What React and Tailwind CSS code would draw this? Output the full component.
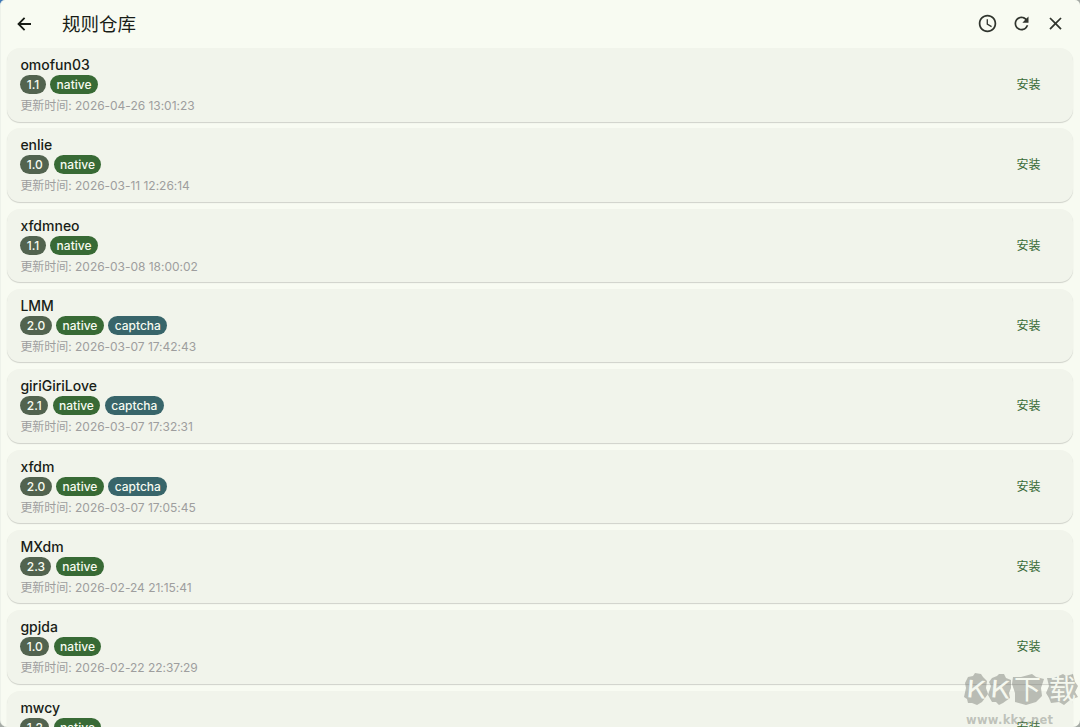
import React from "react";
import { MdSchedule, MdRefresh, MdClose } from "react-icons/md";

const rules = [
  { name: "omofun03", version: "1.1", updated: "2026-04-26 13:01:23" },
  { name: "enlie", version: "1.0", updated: "2026-03-11 12:26:14" },
  { name: "xfdmneo", version: "1.1", updated: "2026-03-08 18:00:02" },
  { name: "LMM", version: "2.0", captcha: true, updated: "2026-03-07 17:42:43" },
  { name: "giriGiriLove", version: "2.1", captcha: true, updated: "2026-03-07 17:32:31" },
  { name: "xfdm", version: "2.0", captcha: true, updated: "2026-03-07 17:05:45" },
  { name: "MXdm", version: "2.3", updated: "2026-02-24 21:15:41" },
  { name: "gpjda", version: "1.0", updated: "2026-02-22 22:37:29" },
  { name: "mwcy", version: "1.2", updated: "2026-02-21 20:14:06" },
];

function Tag({ className, children }) {
  return (
    <span className={`h-[19px] rounded-full px-[6.4px] text-[12px] leading-[19px] font-medium text-[#f7fbf1] ${className}`}>
      {children}
    </span>
  );
}

function RuleCard({ rule }) {
  return (
    <div className="flex h-[73.5px] shrink-0 items-center justify-between rounded-[13px] bg-[#f1f4eb] pr-[32.5px] pl-[13.4px] shadow-[0_1px_1px_rgba(0,0,0,0.17)]">
      <div className="pt-[1.6px]">
        <h3 className="h-[18px] text-[14px] leading-[18px] font-medium text-[#181d17]">{rule.name}</h3>
        <div className="mt-px flex gap-[4.5px]">
          <Tag className="bg-[#52634f]">{rule.version}</Tag>
          <Tag className="bg-[#386a35]">native</Tag>
          {rule.captcha && <Tag className="bg-[#38656a]">captcha</Tag>}
        </div>
        <p className="mt-[3px] h-[18px] text-[12px] leading-[18px] tracking-[-0.03px] text-[#9e9e9e]">更新时间: {rule.updated}</p>
      </div>
      <button className="pt-[0.6px] text-[12px] text-[#386a35]">安装</button>
    </div>
  );
}

function BackArrow() {
  return (
    <svg width="20" height="20" viewBox="0 0 20 20" fill="none" stroke="currentColor" strokeWidth="1.8">
      <path d="M17 10H4.5M10.6 3.9 4.5 10l6.1 6.1" />
    </svg>
  );
}

function Watermark() {
  return (
    <svg className="pointer-events-none absolute right-0 bottom-0" width="120" height="56" viewBox="0 0 120 56">
      <g fill="#777b74" fillOpacity="0.46">
        <path d="M8 6 13 5 15 2 21 3 23 6 27 10 26 17 28 23 22 31 17 34 12 32 8 32 7 28 4 26 6 17 5 12Z" />
        <path d="M32 7 37 5 39 3 44 3 46 7 51 9 51 17 49 22 50 27 43 32 39 34 36 31 32 31 28 24 31 15 29 11Z" />
        <path d="M53 6 61 6 72 3 76 6 84 8 81 17 82 25 76 31 66 34 55 31 55 22 52 13Z" />
        <path d="M87 7 94 7 103 3 106 5 113 3 115 11 118 15 115 21 118 26 110 29 104 34 99 31 91 32 89 27 86 22 89 15Z" />
      </g>
      <g fill="#f5f8ef" fontFamily="Noto Sans CJK SC, sans-serif">
        <text x="6" y="27" fontSize="24" textLength="20" lengthAdjust="spacingAndGlyphs" transform="rotate(5 16 18)">K</text>
        <text x="30" y="27" fontSize="24" textLength="20" lengthAdjust="spacingAndGlyphs" transform="rotate(5 40 18)">K</text>
        <text x="54" y="28" fontSize="27">下</text>
        <text x="89" y="28" fontSize="27">载</text>
      </g>
      <text x="6" y="53" fill="#777b74" fillOpacity="0.42" fontSize="11.5" fontWeight="700" fontFamily="DejaVu Sans, sans-serif" textLength="87">www.kkx.net</text>
    </svg>
  );
}

function App() {
  return (
    <div className="h-[727px] w-[1080px] overflow-hidden bg-[#a5aaa5] bg-[radial-gradient(circle_at_0_0,#3f78b5_0,#3f78b5_6px,#a5aaa5_12px)] font-['Inter','Noto_Sans_CJK_SC',sans-serif]">
      <div className="relative flex h-full flex-col overflow-hidden rounded-t-[5px] rounded-b-[7px] border-l border-[#eef2ea] bg-[#f8fbf2]">
        <header className="flex h-12 shrink-0 items-center justify-between pr-[14px] pb-px pl-[12.5px] text-[#181d17]">
          <div className="flex items-center">
            <BackArrow />
            <h1 className="ml-[28.5px] text-[18.5px] leading-6">规则仓库</h1>
          </div>
          <div className="flex items-center gap-[13px] text-[#30352e]">
            <MdSchedule size={21} />
            <MdRefresh size={21} />
            <MdClose size={21} />
          </div>
        </header>
        <main className="flex min-h-0 flex-1 flex-col gap-[6.83px] overflow-hidden pr-[7px] pl-1.5">
          {rules.map((rule) => (
            <RuleCard key={rule.name} rule={rule} />
          ))}
        </main>
        <Watermark />
      </div>
    </div>
  );
}

export default App;
